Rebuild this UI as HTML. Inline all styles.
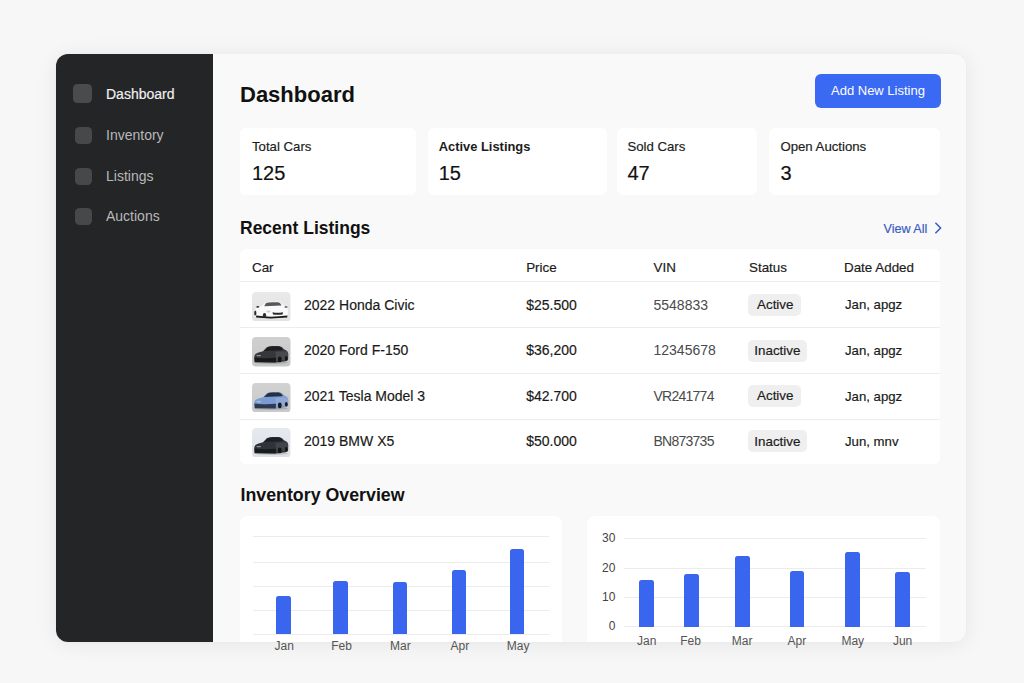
<!DOCTYPE html>
<html><head><meta charset="utf-8"><style>
html,body{margin:0;padding:0;}
body{width:1024px;height:683px;overflow:hidden;position:relative;background:#f7f7f7;font-family:"Liberation Sans",sans-serif;}
.t{position:absolute;white-space:nowrap;line-height:1;}
.r{position:absolute;}
.m{-webkit-text-stroke:0.18px currentColor;}
</style></head><body>
<div class="r" style="left:56px;top:54px;width:910px;height:588px;background:#f9f9f9;border-radius:12px;box-shadow:0 2px 22px rgba(0,0,0,0.075),0 0 1.5px rgba(0,0,0,0.05);"></div>
<div class="r" style="left:56px;top:54px;width:157px;height:588px;background:#242527;border-radius:12px 0 0 12px;"></div>
<div class="r" style="left:73px;top:84px;width:19px;height:19px;background:#4a4b4d;border-radius:4.5px;"></div>
<div class="t m" style="left:106.0px;top:87.35px;font-size:14px;color:#f0f0f0;font-weight:400;">Dashboard</div>
<div class="r" style="left:75px;top:127px;width:17px;height:17px;background:#474849;border-radius:4.5px;"></div>
<div class="t " style="left:106.0px;top:128.15px;font-size:14px;color:#b8b8b8;font-weight:400;">Inventory</div>
<div class="r" style="left:75px;top:168px;width:17px;height:17px;background:#474849;border-radius:4.5px;"></div>
<div class="t " style="left:106.0px;top:168.95px;font-size:14px;color:#b8b8b8;font-weight:400;">Listings</div>
<div class="r" style="left:75px;top:208px;width:17px;height:17px;background:#474849;border-radius:4.5px;"></div>
<div class="t " style="left:106.0px;top:209.45px;font-size:14px;color:#b8b8b8;font-weight:400;">Auctions</div>
<div class="t " style="left:240.0px;top:83.58px;font-size:22px;color:#111;font-weight:700;">Dashboard</div>
<div class="r" style="left:815px;top:74px;width:126px;height:34px;background:#3a69f4;border-radius:6px;"></div>
<div class="t " style="left:831.0px;top:84.30px;font-size:13px;color:#ffffff;font-weight:400;">Add New Listing</div>
<div class="r" style="left:240px;top:128px;width:176px;height:67px;background:#ffffff;border-radius:6px;"></div>
<div class="t m" style="left:252.0px;top:140.33px;font-size:13.2px;color:#1c1c1c;font-weight:400;">Total Cars</div>
<div class="t m" style="left:252.0px;top:163.47px;font-size:20px;color:#111;font-weight:400;">125</div>
<div class="r" style="left:428px;top:128px;width:179px;height:67px;background:#ffffff;border-radius:6px;"></div>
<div class="t " style="left:438.7px;top:140.58px;font-size:12.9px;color:#1c1c1c;font-weight:700;">Active Listings</div>
<div class="t m" style="left:438.7px;top:163.47px;font-size:20px;color:#111;font-weight:400;">15</div>
<div class="r" style="left:617px;top:128px;width:140px;height:67px;background:#ffffff;border-radius:6px;"></div>
<div class="t m" style="left:627.4px;top:140.33px;font-size:13.2px;color:#1c1c1c;font-weight:400;">Sold Cars</div>
<div class="t m" style="left:627.4px;top:163.47px;font-size:20px;color:#111;font-weight:400;">47</div>
<div class="r" style="left:769px;top:128px;width:171px;height:67px;background:#ffffff;border-radius:6px;"></div>
<div class="t m" style="left:780.4px;top:140.33px;font-size:13.2px;color:#1c1c1c;font-weight:400;">Open Auctions</div>
<div class="t m" style="left:780.4px;top:163.47px;font-size:20px;color:#111;font-weight:400;">3</div>
<div class="t " style="left:240.0px;top:219.59px;font-size:17.5px;color:#111;font-weight:700;">Recent Listings</div>
<div class="t m" style="left:883.5px;top:222.73px;font-size:12.6px;color:#3a5cc0;font-weight:400;">View All</div>
<svg class="r" style="left:933px;top:221px" width="10" height="14" viewBox="0 0 10 14"><path d="M2.4 1.8 L7.6 7 L2.4 12.2" fill="none" stroke="#3a5cc0" stroke-width="1.5"/></svg>
<div class="r" style="left:240px;top:249px;width:700px;height:215px;background:#ffffff;border-radius:6px;"></div>
<div class="t m" style="left:252.0px;top:260.86px;font-size:13.4px;color:#1c1c1c;font-weight:400;">Car</div>
<div class="t m" style="left:526.2px;top:260.86px;font-size:13.4px;color:#1c1c1c;font-weight:400;">Price</div>
<div class="t m" style="left:653.5px;top:260.86px;font-size:13.4px;color:#1c1c1c;font-weight:400;">VIN</div>
<div class="t m" style="left:749.0px;top:260.86px;font-size:13.4px;color:#1c1c1c;font-weight:400;">Status</div>
<div class="t m" style="left:844.0px;top:260.86px;font-size:13.4px;color:#1c1c1c;font-weight:400;">Date Added</div>
<div class="r" style="left:240px;top:281px;width:700px;height:1px;background:#ededed;border-radius:0;"></div>
<div class="r" style="left:240px;top:327px;width:700px;height:1px;background:#ededed;border-radius:0;"></div>
<div class="r" style="left:240px;top:373px;width:700px;height:1px;background:#ededed;border-radius:0;"></div>
<div class="r" style="left:240px;top:419px;width:700px;height:1px;background:#ededed;border-radius:0;"></div>
<svg class="r" style="left:252px;top:291.6px" width="38.5" height="29.5" viewBox="0 0 38.5 29.5"><defs><linearGradient id="gwhite" x1="0" y1="0" x2="0" y2="1"><stop offset="0" stop-color="#e9e9e9"/><stop offset="1" stop-color="#e3e3e3"/></linearGradient></defs><rect x="0" y="0" width="38.5" height="29.5" rx="4" fill="url(#gwhite)"/><path d="M3.5 25 L2.6 19.5 Q3 16.5 6.5 15 L10.5 13.8 L13 10.5 Q14.5 9.6 20 9.5 L26.5 9.6 Q29 9.9 30.5 12.6 L33.5 14.2 Q36 15.6 36 18.5 L35.8 23.8 Q35.5 25.2 33.5 25.3 Z" fill="#fafafa"/><path d="M12.2 14.2 L14 10.9 Q15.5 10.3 20 10.2 L26.3 10.3 Q28.3 10.6 29.6 13.6 Z" fill="#555a62"/><ellipse cx="5.8" cy="14.9" rx="1.6" ry="0.8" fill="#333"/><ellipse cx="34" cy="15" rx="1.6" ry="0.8" fill="#444"/><path d="M20.5 20.2 Q25.5 21.2 31 20.2 L30.6 22.4 Q25.5 23.2 21 22.4 Z" fill="#2a2a2a"/><ellipse cx="16.5" cy="19.4" rx="2.2" ry="1" fill="#cfcfcf"/><path d="M4 23.6 Q18 25.8 35.5 23.6 L35.2 25.6 Q18 27.2 4.2 25.6 Z" fill="#1b1b1b"/><ellipse cx="3.3" cy="21" rx="1.1" ry="2.6" fill="#2b2b2b"/><ellipse cx="12.5" cy="23.3" rx="1.6" ry="2.4" fill="#2b2b2b"/></svg>
<div class="t m" style="left:304.0px;top:297.75px;font-size:14px;color:#1a1a1a;font-weight:400;">2022 Honda Civic</div>
<div class="t m" style="left:526.2px;top:297.75px;font-size:14px;color:#1a1a1a;font-weight:400;">$25.500</div>
<div class="t " style="left:653.5px;top:297.75px;font-size:14px;color:#4a4a4a;font-weight:400;letter-spacing:0">5548833</div>
<div class="r" style="left:748px;top:294.1px;width:53px;height:22.0px;background:#efefef;border-radius:5px;"></div>
<div class="t m" style="left:757.0px;top:298.26px;font-size:13.4px;color:#1c1c1c;font-weight:400;">Active</div>
<div class="t m" style="left:845.0px;top:298.43px;font-size:13.2px;color:#1a1a1a;font-weight:400;">Jan, apgz</div>
<svg class="r" style="left:252px;top:337px" width="38.5" height="29.5" viewBox="0 0 38.5 29.5"><defs><linearGradient id="gdark" x1="0" y1="0" x2="0" y2="1"><stop offset="0" stop-color="#d0d0d0"/><stop offset="1" stop-color="#c6c6c6"/></linearGradient></defs><rect x="0" y="0" width="38.5" height="29.5" rx="4" fill="url(#gdark)"/><ellipse cx="19" cy="25.6" rx="17" ry="1.4" fill="#000" opacity="0.15"/><path d="M2.5 25 L2.2 19.8 Q2.6 16.6 6.5 15.6 L11 14.3 L14.8 10.2 Q16.3 9.1 20.5 8.9 L27 8.9 Q30 9.3 32 12.2 L34.8 13.8 Q36.3 15 36.3 17.2 L36.1 22.6 Q35.6 24.1 33.6 24.3 L24 25.5 Z" fill="#36373a"/><path d="M23.5 14.8 L34.8 14.2 Q36.1 15.2 36.1 17.4 L35.9 22.5 L24 24 Z" fill="#5c5d60" opacity="0.5"/><path d="M12 14 L15.5 10.4 Q16.8 9.7 20.5 9.6 L26.8 9.6 Q29.2 10 30.8 12.6 L29.6 13.2 Z" fill="#1d1e21"/><path d="M2.4 20.6 Q8 21.6 14 21.3 L24 20.7 L23.8 25.4 L2.8 25.2 Z" fill="#111" opacity="0.8"/><rect x="4.5" y="18" width="4.5" height="1.2" rx="0.6" fill="#e0e0e0" opacity="0.55"/><ellipse cx="27.8" cy="22.4" rx="1.9" ry="2.8" fill="#151515"/><ellipse cx="34.3" cy="21.2" rx="1.4" ry="2.3" fill="#151515"/></svg>
<div class="t m" style="left:304.0px;top:343.15px;font-size:14px;color:#1a1a1a;font-weight:400;">2020 Ford F-150</div>
<div class="t m" style="left:526.2px;top:343.15px;font-size:14px;color:#1a1a1a;font-weight:400;">$36,200</div>
<div class="t " style="left:653.5px;top:343.15px;font-size:14px;color:#4a4a4a;font-weight:400;letter-spacing:0">12345678</div>
<div class="r" style="left:748px;top:339.5px;width:59px;height:22.0px;background:#efefef;border-radius:5px;"></div>
<div class="t m" style="left:754.3px;top:343.66px;font-size:13.4px;color:#1c1c1c;font-weight:400;">Inactive</div>
<div class="t m" style="left:845.0px;top:343.83px;font-size:13.2px;color:#1a1a1a;font-weight:400;">Jan, apgz</div>
<svg class="r" style="left:252px;top:382.7px" width="38.5" height="29.5" viewBox="0 0 38.5 29.5"><defs><linearGradient id="gblue" x1="0" y1="0" x2="0" y2="1"><stop offset="0" stop-color="#d2d2d2"/><stop offset="1" stop-color="#c9c9c9"/></linearGradient></defs><rect x="0" y="0" width="38.5" height="29.5" rx="4" fill="url(#gblue)"/><ellipse cx="19" cy="25.6" rx="17" ry="1.4" fill="#000" opacity="0.15"/><path d="M2.5 25 L2.2 19.8 Q2.6 16.6 6.5 15.6 L11 14.3 L14.8 10.2 Q16.3 9.1 20.5 8.9 L27 8.9 Q30 9.3 32 12.2 L34.8 13.8 Q36.3 15 36.3 17.2 L36.1 22.6 Q35.6 24.1 33.6 24.3 L24 25.5 Z" fill="#7b9bd2"/><path d="M23.5 14.8 L34.8 14.2 Q36.1 15.2 36.1 17.4 L35.9 22.5 L24 24 Z" fill="#a3b6d8" opacity="0.5"/><path d="M12 14 L15.5 10.4 Q16.8 9.7 20.5 9.6 L26.8 9.6 Q29.2 10 30.8 12.6 L29.6 13.2 Z" fill="#263041"/><path d="M2.4 20.6 Q8 21.6 14 21.3 L24 20.7 L23.8 25.4 L2.8 25.2 Z" fill="#1b2232" opacity="0.8"/><rect x="4.5" y="18" width="4.5" height="1.2" rx="0.6" fill="#e0e0e0" opacity="0.55"/><ellipse cx="27.8" cy="22.4" rx="1.9" ry="2.8" fill="#1d1d1d"/><ellipse cx="34.3" cy="21.2" rx="1.4" ry="2.3" fill="#1d1d1d"/></svg>
<div class="t m" style="left:304.0px;top:388.85px;font-size:14px;color:#1a1a1a;font-weight:400;">2021 Tesla Model 3</div>
<div class="t m" style="left:526.2px;top:388.85px;font-size:14px;color:#1a1a1a;font-weight:400;">$42.700</div>
<div class="t " style="left:653.5px;top:388.85px;font-size:14px;color:#4a4a4a;font-weight:400;letter-spacing:-0.75px">VR241774</div>
<div class="r" style="left:748px;top:385.2px;width:53px;height:22.0px;background:#efefef;border-radius:5px;"></div>
<div class="t m" style="left:757.0px;top:389.36px;font-size:13.4px;color:#1c1c1c;font-weight:400;">Active</div>
<div class="t m" style="left:845.0px;top:389.53px;font-size:13.2px;color:#1a1a1a;font-weight:400;">Jan, apgz</div>
<svg class="r" style="left:252px;top:427.9px" width="38.5" height="29.5" viewBox="0 0 38.5 29.5"><defs><linearGradient id="gnavy" x1="0" y1="0" x2="0" y2="1"><stop offset="0" stop-color="#e6e9ee"/><stop offset="1" stop-color="#dde1e7"/></linearGradient></defs><rect x="0" y="0" width="38.5" height="29.5" rx="4" fill="url(#gnavy)"/><ellipse cx="19" cy="25.6" rx="17" ry="1.4" fill="#000" opacity="0.15"/><path d="M2.5 25 L2.2 19.8 Q2.6 16.6 6.5 15.6 L11 14.3 L14.8 10.2 Q16.3 9.1 20.5 8.9 L27 8.9 Q30 9.3 32 12.2 L34.8 13.8 Q36.3 15 36.3 17.2 L36.1 22.6 Q35.6 24.1 33.6 24.3 L24 25.5 Z" fill="#30343a"/><path d="M23.5 14.8 L34.8 14.2 Q36.1 15.2 36.1 17.4 L35.9 22.5 L24 24 Z" fill="#4f545b" opacity="0.5"/><path d="M12 14 L15.5 10.4 Q16.8 9.7 20.5 9.6 L26.8 9.6 Q29.2 10 30.8 12.6 L29.6 13.2 Z" fill="#1c1f23"/><path d="M2.4 20.6 Q8 21.6 14 21.3 L24 20.7 L23.8 25.4 L2.8 25.2 Z" fill="#131517" opacity="0.8"/><rect x="4.5" y="18" width="4.5" height="1.2" rx="0.6" fill="#e0e0e0" opacity="0.55"/><ellipse cx="27.8" cy="22.4" rx="1.9" ry="2.8" fill="#151515"/><ellipse cx="34.3" cy="21.2" rx="1.4" ry="2.3" fill="#151515"/></svg>
<div class="t m" style="left:304.0px;top:434.05px;font-size:14px;color:#1a1a1a;font-weight:400;">2019 BMW X5</div>
<div class="t m" style="left:526.2px;top:434.05px;font-size:14px;color:#1a1a1a;font-weight:400;">$50.000</div>
<div class="t " style="left:653.5px;top:434.05px;font-size:14px;color:#4a4a4a;font-weight:400;letter-spacing:-0.75px">BN873735</div>
<div class="r" style="left:748px;top:430.4px;width:59px;height:22.0px;background:#efefef;border-radius:5px;"></div>
<div class="t m" style="left:754.3px;top:434.56px;font-size:13.4px;color:#1c1c1c;font-weight:400;">Inactive</div>
<div class="t m" style="left:845.0px;top:434.73px;font-size:13.2px;color:#1a1a1a;font-weight:400;">Jun, mnv</div>
<div class="t " style="left:240.5px;top:487.13px;font-size:17.8px;color:#111;font-weight:700;">Inventory Overview</div>
<div class="r" style="left:240px;top:516px;width:322px;height:126px;background:#ffffff;border-radius:8px 8px 0 0;"></div>
<div class="r" style="left:252.6px;top:536px;width:296.79999999999995px;height:1px;background:#ececec;border-radius:0;"></div>
<div class="r" style="left:252.6px;top:561.5px;width:296.79999999999995px;height:1.0px;background:#ececec;border-radius:0;"></div>
<div class="r" style="left:252.6px;top:585.7px;width:296.79999999999995px;height:1.0px;background:#ececec;border-radius:0;"></div>
<div class="r" style="left:252.6px;top:609.6px;width:296.79999999999995px;height:1.0px;background:#ececec;border-radius:0;"></div>
<div class="r" style="left:252.6px;top:633.5px;width:296.79999999999995px;height:1.0px;background:#ececec;border-radius:0;"></div>
<div class="r" style="left:276px;top:596px;width:14.5px;height:38px;background:#3a65ef;border-radius:2.5px 2.5px 0 0;"></div>
<div class="r" style="left:333px;top:581.4px;width:14.5px;height:52.60000000000002px;background:#3a65ef;border-radius:2.5px 2.5px 0 0;"></div>
<div class="r" style="left:392.7px;top:582.4px;width:14.5px;height:51.60000000000002px;background:#3a65ef;border-radius:2.5px 2.5px 0 0;"></div>
<div class="r" style="left:451.8px;top:569.8px;width:14.5px;height:64.20000000000005px;background:#3a65ef;border-radius:2.5px 2.5px 0 0;"></div>
<div class="r" style="left:509.8px;top:549.2px;width:14.499999999999943px;height:84.79999999999995px;background:#3a65ef;border-radius:2.5px 2.5px 0 0;"></div>
<div class="t" style="left:254.2px;width:60px;text-align:center;top:639.64px;font-size:12px;color:#555;font-weight:400">Jan</div>
<div class="t" style="left:311.6px;width:60px;text-align:center;top:639.64px;font-size:12px;color:#555;font-weight:400">Feb</div>
<div class="t" style="left:370.4px;width:60px;text-align:center;top:639.64px;font-size:12px;color:#555;font-weight:400">Mar</div>
<div class="t" style="left:429.8px;width:60px;text-align:center;top:639.64px;font-size:12px;color:#555;font-weight:400">Apr</div>
<div class="t" style="left:488.2px;width:60px;text-align:center;top:639.64px;font-size:12px;color:#555;font-weight:400">May</div>
<div class="r" style="left:586.5px;top:515.5px;width:353.5px;height:126.5px;background:#ffffff;border-radius:8px 8px 0 0;"></div>
<div class="r" style="left:624.3px;top:538.2px;width:301.4000000000001px;height:1.0px;background:#ececec;border-radius:0;"></div>
<div class="t" style="left:575.4px;width:40px;text-align:right;top:532.34px;font-size:12px;color:#444;font-weight:400">30</div>
<div class="r" style="left:624.3px;top:567.8px;width:301.4000000000001px;height:1.0px;background:#ececec;border-radius:0;"></div>
<div class="t" style="left:575.4px;width:40px;text-align:right;top:561.94px;font-size:12px;color:#444;font-weight:400">20</div>
<div class="r" style="left:624.3px;top:597px;width:301.4000000000001px;height:1px;background:#ececec;border-radius:0;"></div>
<div class="t" style="left:575.4px;width:40px;text-align:right;top:591.14px;font-size:12px;color:#444;font-weight:400">10</div>
<div class="r" style="left:624.3px;top:626.3px;width:301.4000000000001px;height:1.0px;background:#ececec;border-radius:0;"></div>
<div class="t" style="left:575.4px;width:40px;text-align:right;top:620.44px;font-size:12px;color:#444;font-weight:400">0</div>
<div class="r" style="left:639px;top:580.4px;width:14.700000000000045px;height:46.39999999999998px;background:#3a65ef;border-radius:2.5px 2.5px 0 0;"></div>
<div class="r" style="left:684px;top:573.6px;width:14.700000000000045px;height:53.19999999999993px;background:#3a65ef;border-radius:2.5px 2.5px 0 0;"></div>
<div class="r" style="left:735px;top:555.5px;width:14.700000000000045px;height:71.29999999999995px;background:#3a65ef;border-radius:2.5px 2.5px 0 0;"></div>
<div class="r" style="left:789.5px;top:571.4px;width:14.700000000000045px;height:55.39999999999998px;background:#3a65ef;border-radius:2.5px 2.5px 0 0;"></div>
<div class="r" style="left:845px;top:552.3px;width:14.700000000000045px;height:74.5px;background:#3a65ef;border-radius:2.5px 2.5px 0 0;"></div>
<div class="r" style="left:895.2px;top:571.8px;width:14.700000000000045px;height:55.0px;background:#3a65ef;border-radius:2.5px 2.5px 0 0;"></div>
<div class="t" style="left:616.8px;width:60px;text-align:center;top:635.04px;font-size:12px;color:#555;font-weight:400">Jan</div>
<div class="t" style="left:660.5px;width:60px;text-align:center;top:635.04px;font-size:12px;color:#555;font-weight:400">Feb</div>
<div class="t" style="left:712.2px;width:60px;text-align:center;top:635.04px;font-size:12px;color:#555;font-weight:400">Mar</div>
<div class="t" style="left:766.8px;width:60px;text-align:center;top:635.04px;font-size:12px;color:#555;font-weight:400">Apr</div>
<div class="t" style="left:822.8px;width:60px;text-align:center;top:635.04px;font-size:12px;color:#555;font-weight:400">May</div>
<div class="t" style="left:872.6px;width:60px;text-align:center;top:635.04px;font-size:12px;color:#555;font-weight:400">Jun</div>
</body></html>
